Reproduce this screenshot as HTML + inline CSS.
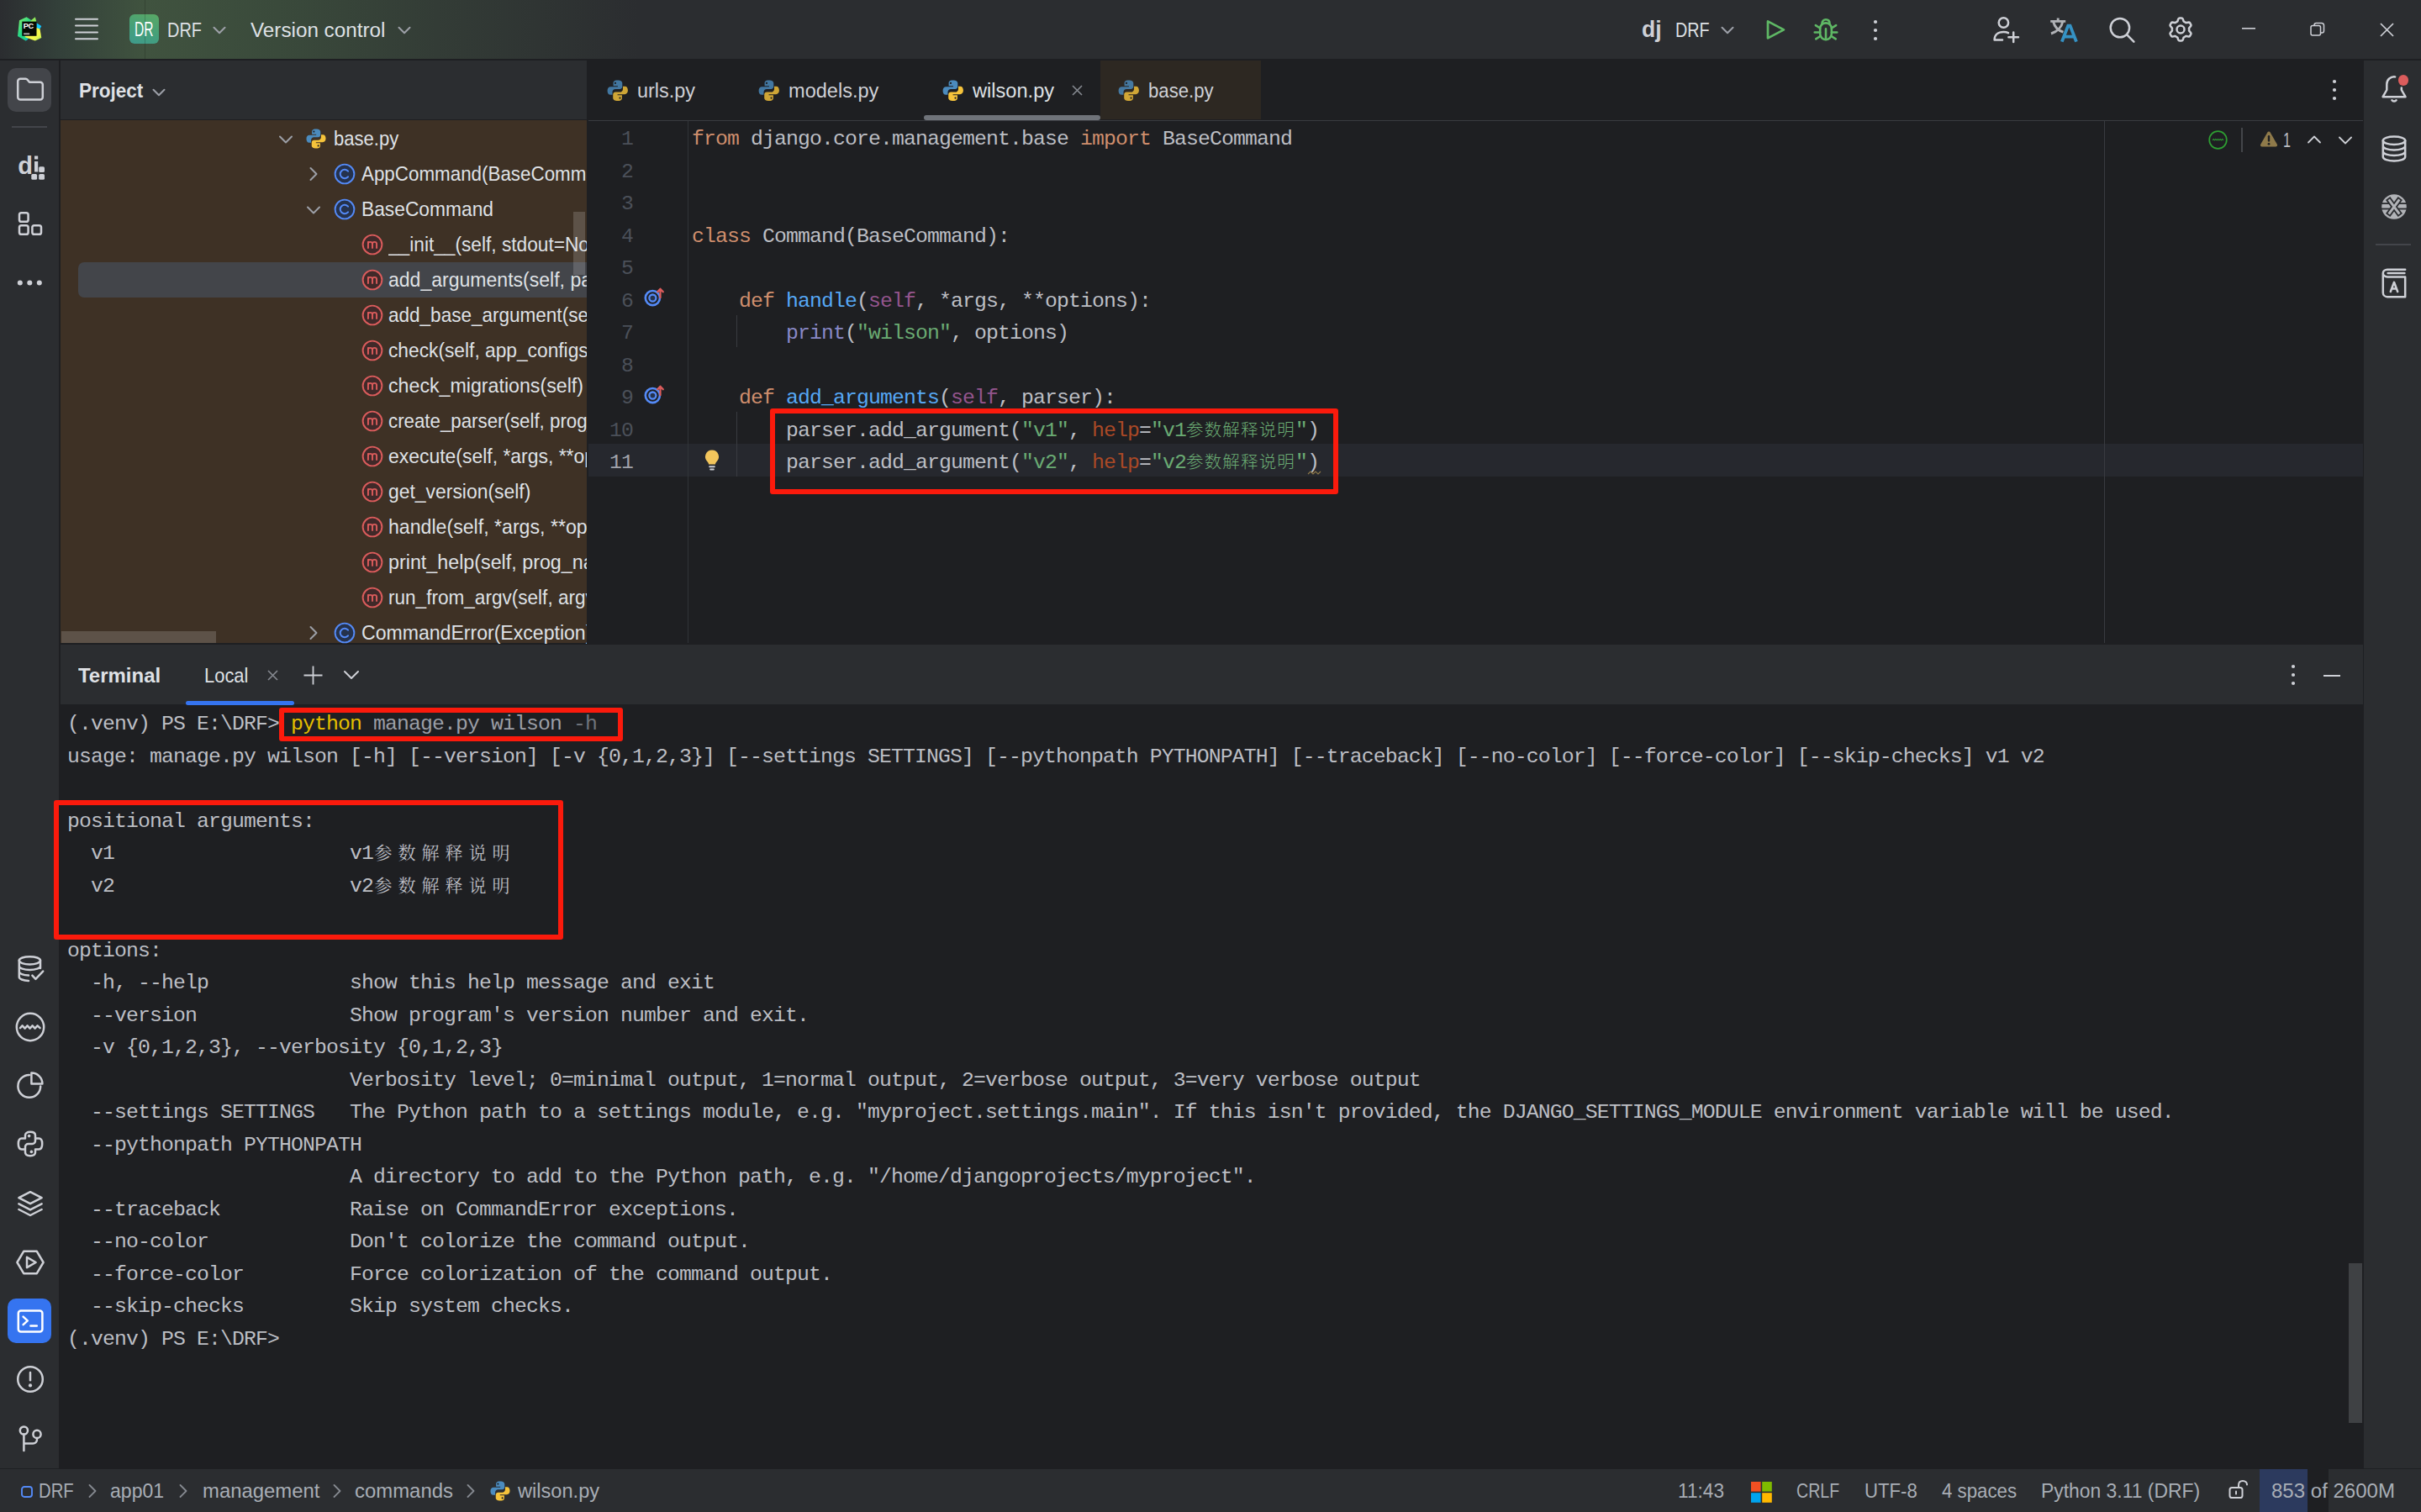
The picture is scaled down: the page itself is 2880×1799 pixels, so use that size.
<!DOCTYPE html>
<html lang="en"><head><meta charset="utf-8"><title>DRF – wilson.py</title>
<style>
*{box-sizing:border-box;margin:0;padding:0}
html,body{width:2880px;height:1799px;overflow:hidden;background:#1e1f22}
body{position:relative;font-family:"Liberation Sans","Noto Sans CJK SC",sans-serif;color:#dfe1e5;font-size:24.2px}
.b{position:absolute}
.t{position:absolute;white-space:pre;line-height:30px;height:30px;color:#dfe1e5}
.x{display:inline-block;transform-origin:0 50%;white-space:pre}
.m{position:absolute;white-space:pre;font-family:"Liberation Mono","Noto Sans CJK SC",monospace;font-size:24.8px;line-height:38.5px;height:38.5px;color:#bcbec4;letter-spacing:-0.882px}
svg{position:absolute;overflow:visible}
.k{color:#cf8e6d}.f{color:#56a8f5}.s{color:#6aab73}.p{color:#94558d}.bi{color:#8888c6}.kw{color:#aa4926}
.cj{font-family:"Liberation Mono","Noto Sans CJK SC",sans-serif;line-height:0}

.ec{font-size:20.5px;letter-spacing:1.17px;font-weight:300}
.tc{font-family:"Liberation Mono","Noto Serif CJK SC","Noto Sans CJK SC",serif;font-size:21px;letter-spacing:7px;margin-left:1.5px;line-height:0}
</style></head><body>
<div class="b" style="left:0px;top:0px;width:2880px;height:70px;background:#2b2d30;background:linear-gradient(90deg,#2b2d30 0,#33403a 70px,#40533f 172px,#3a4a3b 330px,#333c36 520px,#2b2d30 760px)"></div>
<div class="b" style="left:0px;top:70px;width:2880px;height:2px;background:#1e1f22;"></div>
<div class="b" style="left:154px;top:17px;width:35px;height:35px;border-radius:6px;background:linear-gradient(200deg,#5aa864 0%,#45a07a 55%,#3e9a8c 100%)"></div>
<div class="b" style="left:171.5px;top:0px;width:1px;height:70px;background:rgba(0,0,0,0.18);"></div>
<div class="b" style="left:0px;top:72px;width:70px;height:1676px;background:#2b2d30;"></div>
<div class="b" style="left:70px;top:72px;width:2px;height:1676px;background:#1e1f22;"></div>
<div class="b" style="left:2812px;top:72px;width:68px;height:1676px;background:#2b2d30;"></div>
<div class="b" style="left:72px;top:72px;width:626px;height:70px;background:#2b2d30;"></div>
<div class="b" style="left:72px;top:142px;width:626px;height:1px;background:#1e1f22;"></div>
<div class="b" style="left:72px;top:143px;width:626px;height:622px;background:#3e3125;"></div>
<div class="b" style="left:700px;top:142.5px;width:2111px;height:1.2px;background:#393b40;"></div>
<div class="b" style="left:1309px;top:72px;width:191px;height:70px;background:#2d2822;"></div>
<div class="b" style="left:1099px;top:137px;width:210px;height:6px;background:#6f737a;border-radius:3px"></div>
<div class="b" style="left:700px;top:528.25px;width:2111px;height:39px;background:#26282e;"></div>
<div class="b" style="left:818px;top:144px;width:1px;height:621px;background:#313438;"></div>
<div class="b" style="left:2503px;top:143px;width:1px;height:622px;background:#393b40;"></div>
<div class="b" style="left:876px;top:375px;width:1px;height:38px;background:#393b40;"></div>
<div class="b" style="left:876px;top:490px;width:1px;height:77px;background:#393b40;"></div>
<div class="b" style="left:72px;top:767px;width:2739px;height:71px;background:#2b2d30;"></div>
<div class="b" style="left:72px;top:765px;width:2739px;height:2px;background:#1e1f22;"></div>
<div class="b" style="left:221px;top:834px;width:129px;height:5px;background:#3574f0;border-radius:2.5px"></div>
<div class="b" style="left:2794px;top:1503px;width:16px;height:190px;background:#3f4144;border-radius:0"></div>
<div class="b" style="left:0px;top:1748px;width:2880px;height:51px;background:#2b2d30;"></div>
<div class="b" style="left:0px;top:1747px;width:2880px;height:1px;background:#1e1f22;"></div>
<div class="b" style="left:2688px;top:1748px;width:57px;height:51px;background:#2c3a5e;"></div>
<div class="b" style="left:2745px;top:1748px;width:25px;height:51px;background:#1e1f22;"></div>
<div class="b" style="left:9px;top:81px;width:52px;height:52px;background:#43454a;border-radius:10px"></div>
<div class="b" style="left:9px;top:1545px;width:52px;height:53px;background:#3574f0;border-radius:10px"></div>
<div class="b" style="left:14px;top:150px;width:42px;height:2px;background:#43454a;"></div>
<div class="b" style="left:2826px;top:290px;width:42px;height:2px;background:#43454a;"></div>
<div class="b" style="left:93px;top:312px;width:605px;height:42px;background:#43454a;border-radius:7px 0 0 7px"></div>
<div class="b" style="left:682px;top:252px;width:14px;height:75px;background:rgba(255,255,255,0.16);"></div>
<div class="b" style="left:73px;top:751px;width:184px;height:14px;background:rgba(255,255,255,0.16);"></div>
<div class="b" style="left:915.5px;top:486px;width:676.7px;height:101.7px;background:transparent;border:6px solid #fb1a0c;border-radius:3px"></div>
<div class="b" style="left:332px;top:842px;width:409px;height:40px;background:transparent;border:6px solid #fb1a0c;border-radius:3px"></div>
<div class="b" style="left:64px;top:952px;width:606px;height:166px;background:transparent;border:6px solid #fb1a0c;border-radius:3px"></div>
<div class="t" style="left:199px;top:20.8px"><span class="x" style="transform:scaleX(0.8246)">DRF</span></div>
<div class="t" style="left:298px;top:20.8px"><span class="x" style="transform:scaleX(1.0025)">Version control</span></div>
<div class="t" style="left:1993px;top:20.8px"><span class="x" style="transform:scaleX(0.8166)">DRF</span></div>
<div class="t" style="left:1953.4px;top:19.599999999999998px"><span class="x" style="transform:scaleX(0.9651);font-size:27.5px;font-weight:700;color:#ced0d6">dj</span></div>
<div class="t" style="left:160.3px;top:20.099999999999998px"><span class="x" style="transform:scaleX(0.6770);font-size:23px;font-weight:400;color:#ffffff">DR</span></div>
<div class="t" style="left:93.7px;top:93.1px"><span class="x" style="transform:scaleX(0.9537);font-size:23.6px;font-weight:700">Project</span></div>
<div class="t" style="left:396.8px;top:150.3px;width:301.2px;overflow:hidden"><span class="x" style="transform:scaleX(0.9113)">base.py</span></div>
<div class="t" style="left:429.8px;top:192.3px;width:268.2px;overflow:hidden"><span class="x" style="transform:scaleX(0.9252)">AppCommand(BaseCommand)</span></div>
<div class="t" style="left:429.8px;top:234.3px;width:268.2px;overflow:hidden"><span class="x" style="transform:scaleX(0.9418)">BaseCommand</span></div>
<div class="t" style="left:462.2px;top:276.3px;width:235.8px;overflow:hidden"><span class="x" style="transform:scaleX(0.9377)">__init__(self, stdout=None, stderr=None)</span></div>
<div class="t" style="left:462.2px;top:318.3px;width:235.8px;overflow:hidden"><span class="x" style="transform:scaleX(0.9523)">add_arguments(self, parser)</span></div>
<div class="t" style="left:462.2px;top:360.3px;width:235.8px;overflow:hidden"><span class="x" style="transform:scaleX(0.9312)">add_base_argument(self, parser)</span></div>
<div class="t" style="left:462.2px;top:402.3px;width:235.8px;overflow:hidden"><span class="x" style="transform:scaleX(0.9403)">check(self, app_configs=None)</span></div>
<div class="t" style="left:462.2px;top:444.3px;width:235.8px;overflow:hidden"><span class="x" style="transform:scaleX(0.9588)">check_migrations(self)</span></div>
<div class="t" style="left:462.2px;top:486.3px;width:235.8px;overflow:hidden"><span class="x" style="transform:scaleX(0.9214)">create_parser(self, prog_name)</span></div>
<div class="t" style="left:462.2px;top:528.3px;width:235.8px;overflow:hidden"><span class="x" style="transform:scaleX(0.9482)">execute(self, *args, **options)</span></div>
<div class="t" style="left:462.2px;top:570.3px;width:235.8px;overflow:hidden"><span class="x" style="transform:scaleX(0.9469)">get_version(self)</span></div>
<div class="t" style="left:462.2px;top:612.3px;width:235.8px;overflow:hidden"><span class="x" style="transform:scaleX(0.9564)">handle(self, *args, **options)</span></div>
<div class="t" style="left:462.2px;top:654.3px;width:235.8px;overflow:hidden"><span class="x" style="transform:scaleX(0.9627)">print_help(self, prog_name)</span></div>
<div class="t" style="left:462.2px;top:696.3px;width:235.8px;overflow:hidden"><span class="x" style="transform:scaleX(0.9330)">run_from_argv(self, argv)</span></div>
<div class="t" style="left:429.8px;top:738.3px;width:268.2px;overflow:hidden"><span class="x" style="transform:scaleX(0.9538)">CommandError(Exception)</span></div>
<div class="t" style="left:757.8px;top:92.8px"><span class="x" style="transform:scaleX(0.9684);color:#ced0d6">urls.py</span></div>
<div class="t" style="left:938.3px;top:92.8px"><span class="x" style="transform:scaleX(0.9741);color:#ced0d6">models.py</span></div>
<div class="t" style="left:1157.2px;top:92.8px"><span class="x" style="transform:scaleX(0.9760)">wilson.py</span></div>
<div class="t" style="left:1365.8px;top:92.8px"><span class="x" style="transform:scaleX(0.9172);color:#ced0d6">base.py</span></div>
<div class="t" style="left:2715.8px;top:151.70000000000002px"><span class="x" style="transform:scaleX(0.6690);color:#bcbec4">1</span></div>
<div class="t" style="left:93px;top:788.6999999999999px"><span class="x" style="transform:scaleX(1.0166);font-size:23.6px;font-weight:700">Terminal</span></div>
<div class="t" style="left:242.9px;top:788.6999999999999px"><span class="x" style="transform:scaleX(0.9061)">Local</span></div>
<div class="t" style="left:46.2px;top:1759.3px"><span class="x" style="transform:scaleX(0.8387);color:#a8adb5">DRF</span></div>
<div class="t" style="left:130.9px;top:1759.3px"><span class="x" style="transform:scaleX(0.9529);color:#a8adb5">app01</span></div>
<div class="t" style="left:240.5px;top:1759.3px"><span class="x" style="transform:scaleX(0.9880);color:#a8adb5">management</span></div>
<div class="t" style="left:421.7px;top:1759.3px"><span class="x" style="transform:scaleX(0.9890);color:#a8adb5">commands</span></div>
<div class="t" style="left:616.4px;top:1759.3px"><span class="x" style="transform:scaleX(0.9760);color:#a8adb5">wilson.py</span></div>
<div class="t" style="left:1996px;top:1759.3px"><span class="x" style="transform:scaleX(0.9364);color:#a8adb5">11:43</span></div>
<div class="t" style="left:2137.2px;top:1759.3px"><span class="x" style="transform:scaleX(0.8089);color:#a8adb5">CRLF</span></div>
<div class="t" style="left:2217.8px;top:1759.3px"><span class="x" style="transform:scaleX(0.9164);color:#a8adb5">UTF-8</span></div>
<div class="t" style="left:2309.7px;top:1759.3px"><span class="x" style="transform:scaleX(0.9203);color:#a8adb5">4 spaces</span></div>
<div class="t" style="left:2427.5px;top:1759.3px"><span class="x" style="transform:scaleX(0.9462);color:#a8adb5">Python 3.11 (DRF)</span></div>
<div class="t" style="left:2702.4px;top:1759.3px"><span class="x" style="transform:scaleX(0.9937);color:#a8adb5">853 of 2600M</span></div>
<div class="m" style="left:653px;width:100px;text-align:right;top:146.3px;color:#4b5059">1</div>
<div class="m" style="left:823px;top:146.3px"><span class="k">from</span> django.core.management.base <span class="k">import</span> BaseCommand</div>
<div class="m" style="left:653px;width:100px;text-align:right;top:184.8px;color:#4b5059">2</div>
<div class="m" style="left:653px;width:100px;text-align:right;top:223.3px;color:#4b5059">3</div>
<div class="m" style="left:653px;width:100px;text-align:right;top:261.8px;color:#4b5059">4</div>
<div class="m" style="left:823px;top:261.8px"><span class="k">class</span> Command(BaseCommand):</div>
<div class="m" style="left:653px;width:100px;text-align:right;top:300.3px;color:#4b5059">5</div>
<div class="m" style="left:653px;width:100px;text-align:right;top:338.8px;color:#4b5059">6</div>
<div class="m" style="left:823px;top:338.8px">    <span class="k">def</span> <span class="f">handle</span>(<span class="p">self</span>, *args, **options):</div>
<div class="m" style="left:653px;width:100px;text-align:right;top:377.3px;color:#4b5059">7</div>
<div class="m" style="left:823px;top:377.3px">        <span class="bi">print</span>(<span class="s">"wilson"</span>, options)</div>
<div class="m" style="left:653px;width:100px;text-align:right;top:415.8px;color:#4b5059">8</div>
<div class="m" style="left:653px;width:100px;text-align:right;top:454.3px;color:#4b5059">9</div>
<div class="m" style="left:823px;top:454.3px">    <span class="k">def</span> <span class="f">add_arguments</span>(<span class="p">self</span>, parser):</div>
<div class="m" style="left:653px;width:100px;text-align:right;top:492.8px;color:#4b5059">10</div>
<div class="m" style="left:823px;top:492.8px">        parser.add_argument(<span class="s">"v1"</span>, <span class="kw">help</span>=<span class="s">"v1<span class="cj ec">参数解释说明</span>"</span>)</div>
<div class="m" style="left:653px;width:100px;text-align:right;top:531.3px;color:#a1a3ab">11</div>
<div class="m" style="left:823px;top:531.3px">        parser.add_argument(<span class="s">"v2"</span>, <span class="kw">help</span>=<span class="s">"v2<span class="cj ec">参数解释说明</span>"</span>)</div>
<div class="m" style="left:80px;top:842.05px">(.venv) PS E:\DRF&gt; <span style="color:#e5bf00">python</span> <span style="color:#9b9ea6">manage.py wilson</span> <span style="color:#6f737a">-h</span></div>
<div class="m" style="left:80px;top:880.55px">usage: manage.py wilson [-h] [--version] [-v {0,1,2,3}] [--settings SETTINGS] [--pythonpath PYTHONPATH] [--traceback] [--no-color] [--force-color] [--skip-checks] v1 v2</div>
<div class="m" style="left:80px;top:957.55px">positional arguments:</div>
<div class="m" style="left:80px;top:996.05px">  v1                    v1<span class="cj tc">参数解释说明</span></div>
<div class="m" style="left:80px;top:1034.55px">  v2                    v2<span class="cj tc">参数解释说明</span></div>
<div class="m" style="left:80px;top:1111.55px">options:</div>
<div class="m" style="left:80px;top:1150.05px">  -h, --help            show this help message and exit</div>
<div class="m" style="left:80px;top:1188.55px">  --version             Show program's version number and exit.</div>
<div class="m" style="left:80px;top:1227.05px">  -v {0,1,2,3}, --verbosity {0,1,2,3}</div>
<div class="m" style="left:80px;top:1265.55px">                        Verbosity level; 0=minimal output, 1=normal output, 2=verbose output, 3=very verbose output</div>
<div class="m" style="left:80px;top:1304.05px">  --settings SETTINGS   The Python path to a settings module, e.g. "myproject.settings.main". If this isn't provided, the DJANGO_SETTINGS_MODULE environment variable will be used.</div>
<div class="m" style="left:80px;top:1342.55px">  --pythonpath PYTHONPATH</div>
<div class="m" style="left:80px;top:1381.05px">                        A directory to add to the Python path, e.g. "/home/djangoprojects/myproject".</div>
<div class="m" style="left:80px;top:1419.55px">  --traceback           Raise on CommandError exceptions.</div>
<div class="m" style="left:80px;top:1458.05px">  --no-color            Don't colorize the command output.</div>
<div class="m" style="left:80px;top:1496.55px">  --force-color         Force colorization of the command output.</div>
<div class="m" style="left:80px;top:1535.05px">  --skip-checks         Skip system checks.</div>
<div class="m" style="left:80px;top:1573.55px">(.venv) PS E:\DRF&gt;</div>
<svg style="left:20.9px;top:20px" width="28.4" height="28.6" viewBox="0 0 28.4 28.6" fill="none"><defs><linearGradient id="pg1" x1="0" y1="0" x2="1" y2="1"><stop offset="0" stop-color="#8af06a"/><stop offset=".45" stop-color="#21d789"/><stop offset="1" stop-color="#16c98f"/></linearGradient><linearGradient id="pg2" x1="0" y1="0" x2="1" y2="1"><stop offset="0" stop-color="#f4f94c"/><stop offset=".7" stop-color="#f1f74b"/><stop offset="1" stop-color="#9be95a"/></linearGradient></defs><path d="M2 4.300L10.600 0.300L16.200 4L22.200 5.300L12.200 26.800L9.600 28.400L0 23.100Z" fill="url(#pg1)"/><path d="M16.200 4L20.800 0.300L22.300 5.500L12 9Z" fill="#8fe85a"/><path d="M22.400 7.200L28.300 10.900L26.500 14.600L22.400 13.200Z" fill="#12c6ff"/><path d="M22.600 13.100L26.500 14.500L28.300 25.100L20.800 28.400L8.300 24.100L12 20Z" fill="url(#pg2)"/><path d="M9.600 28.400L12.200 26.800L10.800 25Z" fill="#0ea8e8"/><rect x="5.300" y="5.600" width="17.200" height="17.200" fill="#050a05"/><rect x="7.100" y="19.300" width="7.100" height="2" fill="#a6a8a6"/><text x="6.700" y="14.300" font-family="Liberation Sans,sans-serif" font-weight="700" font-size="9.200" fill="#fff" letter-spacing="-0.2">PC</text></svg>
<svg style="left:89px;top:20px" width="28" height="30" viewBox="0 0 28 30" fill="none"><rect x="0" y="1.8000000000000007" width="28" height="2" rx="1" fill="#ced0d6"/><rect x="0" y="9.600000000000001" width="28" height="2" rx="1" fill="#ced0d6"/><rect x="0" y="17.4" width="28" height="2" rx="1" fill="#ced0d6"/><rect x="0" y="25.200000000000003" width="28" height="2" rx="1" fill="#ced0d6"/></svg>
<svg style="left:261px;top:35.5px" width="1" height="1"><path d="M-6.5 -3.25 L0 3.25 L6.5 -3.25" stroke="#9da0a8" stroke-width="2" fill="none" stroke-linecap="round" stroke-linejoin="round"/></svg>
<svg style="left:481px;top:35.5px" width="1" height="1"><path d="M-6.5 -3.25 L0 3.25 L6.5 -3.25" stroke="#9da0a8" stroke-width="2" fill="none" stroke-linecap="round" stroke-linejoin="round"/></svg>
<svg style="left:189px;top:109.5px" width="1" height="1"><path d="M-6.5 -3.25 L0 3.25 L6.5 -3.25" stroke="#9da0a8" stroke-width="2" fill="none" stroke-linecap="round" stroke-linejoin="round"/></svg>
<svg style="left:2055px;top:36px" width="1" height="1"><path d="M-6.5 -3.25 L0 3.25 L6.5 -3.25" stroke="#9da0a8" stroke-width="2" fill="none" stroke-linecap="round" stroke-linejoin="round"/></svg>
<svg style="left:417.8px;top:803.4px" width="1" height="1"><path d="M-8.0 -4.0 L0 4.0 L8.0 -4.0" stroke="#ced0d6" stroke-width="2" fill="none" stroke-linecap="round" stroke-linejoin="round"/></svg>
<svg style="left:15.5px;top:86.4px" width="40" height="40" viewBox="0 0 20 20" fill="none"><path d="M2.6 5.4A1.5 1.5 0 0 1 4.1 3.900H7.2C7.7 3.900 8.1 4.100 8.4 4.500L9.5 5.900H15.9A1.500 1.500 0 0 1 17.400 7.400V14.700A1.500 1.500 0 0 1 15.900 16.200H4.100A1.500 1.500 0 0 1 2.600 14.700Z" stroke="#ced0d6" stroke-width="1.25" stroke-linecap="round" stroke-linejoin="round"/></svg>
<svg style="left:20px;top:180px" width="36" height="36" viewBox="0 0 36 36" fill="none"><text x="1.2" y="27" font-family="Liberation Sans,sans-serif" font-weight="700" font-size="29" fill="#ced0d6">d</text><rect x="21" y="5.500" width="4.200" height="4" fill="#ced0d6"/><rect x="21" y="12" width="4.200" height="12.500" fill="#ced0d6"/><rect x="17.300" y="27" width="6.800" height="6.800" rx="1.600" fill="#ced0d6"/><rect x="26.200" y="27" width="6.800" height="6.800" rx="1.600" fill="#ced0d6"/><rect x="26.200" y="18.200" width="6.800" height="6.800" rx="1.600" fill="#ced0d6"/></svg>
<svg style="left:15.5px;top:246.39999999999998px" width="40" height="40" viewBox="0 0 20 20" fill="none"><rect x="3.500" y="3.600" width="5.300" height="5.300" rx="1.200" stroke="#ced0d6" stroke-width="1.25" stroke-linecap="round" stroke-linejoin="round"/><rect x="3.500" y="11.100" width="5.300" height="5.300" rx="1.200" stroke="#ced0d6" stroke-width="1.25" stroke-linecap="round" stroke-linejoin="round"/><rect x="11.200" y="11.100" width="5.300" height="5.300" rx="1.200" stroke="#ced0d6" stroke-width="1.25" stroke-linecap="round" stroke-linejoin="round"/></svg>
<svg style="left:20px;top:330px" width="32" height="12" viewBox="0 0 32 12" fill="none"><circle cx="3.8000000000000007" cy="6.500" r="3" fill="#ced0d6"/><circle cx="15.299999999999997" cy="6.500" r="3" fill="#ced0d6"/><circle cx="26.799999999999997" cy="6.500" r="3" fill="#ced0d6"/></svg>
<svg style="left:15.5px;top:1131.8px" width="40" height="40" viewBox="0 0 20 20" fill="none"><ellipse cx="9.700" cy="5.400" rx="6.300" ry="2.300" stroke="#ced0d6" stroke-width="1.25" stroke-linecap="round" stroke-linejoin="round"/><path d="M3.400 5.400V15.200A6.300 2.300 0 0 0 9 17.490M16 5.400V10M3.400 8.700A6.300 2.300 0 0 0 16 8.700M3.400 12A6.300 2.300 0 0 0 9 14.290" stroke="#ced0d6" stroke-width="1.25" stroke-linecap="round" stroke-linejoin="round"/><path d="M11.200 14.300L13.200 16.400L17.600 11.800" stroke="#ced0d6" stroke-width="1.25" stroke-linecap="round" stroke-linejoin="round"/></svg>
<svg style="left:15.5px;top:1201.5px" width="40" height="40" viewBox="0 0 20 20" fill="none"><circle cx="10" cy="10" r="8.100" stroke="#ced0d6" stroke-width="1.25" stroke-linecap="round" stroke-linejoin="round"/><path d="M4 10.600L5.300 9.200L6.800 10.800L8.300 9.200L9.800 10.800L11.300 9.200L12.800 10.800L14.300 9.200L15.800 10.600" stroke="#ced0d6" stroke-width="1.25" stroke-linecap="round" stroke-linejoin="round"/></svg>
<svg style="left:15.5px;top:1271.4px" width="40" height="40" viewBox="0 0 20 20" fill="none"><path d="M9.400 4A6.700 6.700 0 1 0 16.100 10.700" stroke="#ced0d6" stroke-width="1.25" stroke-linecap="round" stroke-linejoin="round"/><path d="M10.700 2.800V9.300H17.200A6.500 6.500 0 0 0 10.700 2.800Z" stroke="#ced0d6" stroke-width="1.25" stroke-linecap="round" stroke-linejoin="round"/></svg>
<svg style="left:15.5px;top:1341.2px" width="40" height="40" viewBox="0 0 20 20" fill="none"><path d="M7 6.800V5C7 3.700 8 2.900 10 2.900S13 3.700 13 5V8.200C13 9.200 12.200 10 11.200 10H8.800C7.800 10 7 10.800 7 11.800V15C7 16.300 8 17.100 10 17.100S13 16.300 13 15V13.200M7 6.800H4.900C3.600 6.800 2.900 8 2.900 10S3.600 13.200 4.900 13.200H7M13 6.800H15.100C16.400 6.800 17.100 8 17.100 10S16.400 13.200 15.100 13.200H13" stroke="#ced0d6" stroke-width="1.25" stroke-linecap="round" stroke-linejoin="round"/><circle cx="9.300" cy="5.300" r=".9" fill="#ced0d6"/><circle cx="10.700" cy="14.700" r=".9" fill="#ced0d6"/></svg>
<svg style="left:15.5px;top:1412.0px" width="40" height="40" viewBox="0 0 20 20" fill="none"><path d="M10 3.100L16.800 6.600L10 10.100L3.200 6.600Z" stroke="#ced0d6" stroke-width="1.25" stroke-linecap="round" stroke-linejoin="round"/><path d="M3.200 10.200L10 13.700L16.800 10.200" stroke="#ced0d6" stroke-width="1.25" stroke-linecap="round" stroke-linejoin="round"/><path d="M3.200 13.500L10 17L16.800 13.500" stroke="#ced0d6" stroke-width="1.25" stroke-linecap="round" stroke-linejoin="round"/></svg>
<svg style="left:15.5px;top:1481.5px" width="40" height="40" viewBox="0 0 20 20" fill="none"><path d="M6.100 3.400H13.900L17.800 10L13.900 16.600H6.100L2.200 10Z" stroke="#ced0d6" stroke-width="1.25" stroke-linecap="round" stroke-linejoin="round"/><path d="M8 6.900L13.300 10L8 13.100Z" stroke="#ced0d6" stroke-width="1.25" stroke-linecap="round" stroke-linejoin="round"/></svg>
<svg style="left:15.5px;top:1551.5px" width="40" height="40" viewBox="0 0 20 20" fill="none"><rect x="2.900" y="3.700" width="14.300" height="12.600" rx="1.500" stroke="#fff" stroke-width="1.25" stroke-linecap="round" stroke-linejoin="round"/><path d="M5.800 7.300L8.400 9.700L5.800 12.100M10.200 12.800H13.900" stroke="#fff" stroke-width="1.25" stroke-linecap="round" stroke-linejoin="round"/></svg>
<svg style="left:15.5px;top:1621.3px" width="40" height="40" viewBox="0 0 20 20" fill="none"><circle cx="10" cy="10" r="7.400" stroke="#ced0d6" stroke-width="1.25" stroke-linecap="round" stroke-linejoin="round"/><path d="M10 6V10.600" stroke="#ced0d6" stroke-width="1.25" stroke-linecap="round" stroke-linejoin="round"/><circle cx="10" cy="13.700" r="1.050" fill="#ced0d6"/></svg>
<svg style="left:15.5px;top:1691.5px" width="40" height="40" viewBox="0 0 20 20" fill="none"><circle cx="6.200" cy="5" r="2.300" stroke="#ced0d6" stroke-width="1.25" stroke-linecap="round" stroke-linejoin="round"/><circle cx="14" cy="7.200" r="2.300" stroke="#ced0d6" stroke-width="1.25" stroke-linecap="round" stroke-linejoin="round"/><path d="M6.200 7.300V17M14 9.500V10.400C14 11.800 13 12.700 11.600 12.700H6.200" stroke="#ced0d6" stroke-width="1.25" stroke-linecap="round" stroke-linejoin="round"/></svg>
<svg style="left:2827.6px;top:86.4px" width="40" height="40" viewBox="0 0 20 20" fill="none"><path d="M10.6 2.700A4.400 4.400 0 0 0 5.650 7.100V10.500L3.300 14.600H16.750L14.400 10.500V9.200" stroke="#ced0d6" stroke-width="1.25" stroke-linecap="round" stroke-linejoin="round"/><path d="M8.700 16.600C9 17.100 9.500 17.300 10 17.300S11 17.100 11.300 16.600" stroke="#ced0d6" stroke-width="1.25" stroke-linecap="round" stroke-linejoin="round"/></svg>
<div class="b" style="left:2852.5px;top:89px;width:12.600px;height:12.600px;border-radius:50%;background:#db5c5c"></div>
<svg style="left:2827.6px;top:156.6px" width="40" height="40" viewBox="0 0 20 20" fill="none"><ellipse cx="10" cy="5.100" rx="6.600" ry="2.400" stroke="#ced0d6" stroke-width="1.25" stroke-linecap="round" stroke-linejoin="round"/><path d="M3.400 5.100V14.900A6.600 2.400 0 0 0 16.600 14.900V5.100M3.400 8.400A6.600 2.400 0 0 0 16.600 8.400M3.400 11.650A6.600 2.400 0 0 0 16.600 11.650" stroke="#ced0d6" stroke-width="1.25" stroke-linecap="round" stroke-linejoin="round"/></svg>
<svg style="left:2827.6px;top:226.2px" width="40" height="40" viewBox="0 0 20 20" fill="none"><circle cx="10" cy="10" r="7.400" fill="#b1b3b7"/><rect x="2" y="7.600" width="16" height=".9" fill="#2b2d30"/><rect x="2" y="10.800" width="16" height=".9" fill="#2b2d30"/><path d="M7.300 6.300L12.700 13.700M12.700 6.300L7.300 13.700" stroke="#2b2d30" stroke-width="3.300" stroke-linecap="square"/><path d="M7.300 6.300L12.700 13.700M12.700 6.300L7.300 13.700" stroke="#b1b3b7" stroke-width="1.500" stroke-linecap="square"/></svg>
<svg style="left:2827.6px;top:316.8px" width="40" height="40" viewBox="0 0 20 20" fill="none"><path d="M16.600 1.900H6A2.600 2.150 0 0 0 6 6.200H16.600V18.100H5.900A2.500 2.500 0 0 1 3.400 15.600V4.050" stroke="#ced0d6" stroke-width="1.25" stroke-linecap="round" stroke-linejoin="round"/><path d="M6.300 4.050H16.200" stroke="#ced0d6" stroke-width="1.25" stroke-linecap="round" stroke-linejoin="round"/><path d="M7.900 15L10 9.400L12.100 15M8.600 13.300H11.400" stroke="#ced0d6" stroke-width="1.25" stroke-linecap="round" stroke-linejoin="round"/></svg>
<svg style="left:2101px;top:23px" width="24" height="25" viewBox="0 0 24 25" fill="none"><path d="M2 2.4L21 12.4L2 22.4Z" stroke="#5fb865" stroke-width="2.700" stroke-linejoin="round" fill="none"/></svg>
<svg style="left:2153.0px;top:16.0px" width="38" height="38" viewBox="0 0 20 20" fill="none"><path d="M6.4 9.4C6.4 7.4 8 6 10 6S13.6 7.4 13.6 9.4V12.6C13.6 14.8 12 16.4 10 16.4S6.4 14.8 6.4 12.6Z" stroke="#5fb865" stroke-width="1.350" stroke-linecap="round" stroke-linejoin="round"/><path d="M7.6 6.4C7.6 4.8 8.6 3.8 10 3.8S12.4 4.8 12.4 6.4" stroke="#5fb865" stroke-width="1.350" stroke-linecap="round" stroke-linejoin="round"/><path d="M10 9.6V16M6.4 9.2L3.6 7.4M13.6 9.2L16.4 7.4M6.4 11.8H3M13.6 11.8H17M6.6 14.2L3.8 16M13.4 14.2L16.2 16" stroke="#5fb865" stroke-width="1.350" stroke-linecap="round" stroke-linejoin="round"/></svg>
<svg style="left:2228px;top:21.5px" width="6" height="28" viewBox="0 0 6 28" fill="none"><circle cx="3" cy="4" r="2.1" fill="#ced0d6"/><circle cx="3" cy="14" r="2.1" fill="#ced0d6"/><circle cx="3" cy="24" r="2.1" fill="#ced0d6"/></svg>
<svg style="left:2774px;top:93.3px" width="6" height="28" viewBox="0 0 6 28" fill="none"><circle cx="3" cy="4" r="2.1" fill="#ced0d6"/><circle cx="3" cy="14" r="2.1" fill="#ced0d6"/><circle cx="3" cy="24" r="2.1" fill="#ced0d6"/></svg>
<svg style="left:2724.8px;top:789.4px" width="6" height="28" viewBox="0 0 6 28" fill="none"><circle cx="3" cy="4" r="2.1" fill="#ced0d6"/><circle cx="3" cy="14" r="2.1" fill="#ced0d6"/><circle cx="3" cy="24" r="2.1" fill="#ced0d6"/></svg>
<svg style="left:2366.0px;top:15.0px" width="40" height="40" viewBox="0 0 20 20" fill="none"><circle cx="8.700" cy="6" r="2.850" stroke="#ced0d6" stroke-width="1.25" stroke-linecap="round" stroke-linejoin="round"/><path d="M8 16.200H3.300C3.300 13.200 5.500 11.500 8.700 11.500C9.800 11.500 10.700 11.700 11.500 12.100" stroke="#ced0d6" stroke-width="1.25" stroke-linecap="round" stroke-linejoin="round"/><path d="M14.600 11.700V17.500M11.700 14.600H17.500" stroke="#ced0d6" stroke-width="1.25" stroke-linecap="round" stroke-linejoin="round"/></svg>
<svg style="left:2433.5px;top:15.0px" width="40" height="40" viewBox="0 0 20 20" fill="none"><path d="M2.600 5.200H11.600M7.100 3.200V5.200M4.300 5.400C5 8.200 7.200 10.600 10.200 11.600M9.900 5.400C9.300 8.400 6.800 11.300 3 12.500" stroke="#b0b2b6" stroke-width="1.450" fill="none" stroke-linecap="butt" stroke-linejoin="round"/><path d="M9.400 17.300L13.100 7.800H14.300L18 17.300M10.900 14.300H16.500" stroke="#3592c4" stroke-width="1.900" fill="none" stroke-linejoin="miter"/></svg>
<svg style="left:2504.0px;top:15.0px" width="40" height="40" viewBox="0 0 20 20" fill="none"><circle cx="8.950" cy="9.050" r="5.600" stroke="#ced0d6" stroke-width="1.25" stroke-linecap="round" stroke-linejoin="round"/><path d="M13.100 13.200L17.200 17.300" stroke="#ced0d6" stroke-width="1.25" stroke-linecap="round" stroke-linejoin="round"/></svg>
<svg style="left:2573.5px;top:15.399999999999999px" width="40" height="40" viewBox="0 0 20 20" fill="none"><path d="M15.05 10.00L15.04 10.33L15.01 10.66L15.24 11.04L15.70 11.53L16.11 12.07L16.24 12.58L16.05 12.99L15.85 13.38L15.61 13.75L15.36 14.11L14.85 14.25L14.17 14.17L13.53 14.02L13.07 14.01L12.81 14.20L12.53 14.37L12.23 14.53L11.93 14.67L11.72 15.06L11.53 15.70L11.26 16.33L10.88 16.69L10.44 16.74L10.00 16.75L9.56 16.74L9.12 16.69L8.74 16.33L8.47 15.70L8.28 15.06L8.07 14.67L7.77 14.53L7.48 14.37L7.19 14.20L6.93 14.01L6.47 14.02L5.83 14.17L5.15 14.25L4.64 14.11L4.39 13.75L4.15 13.38L3.95 12.99L3.76 12.58L3.89 12.07L4.30 11.53L4.76 11.04L4.99 10.66L4.96 10.33L4.95 10.00L4.96 9.67L4.99 9.34L4.76 8.96L4.30 8.47L3.89 7.93L3.76 7.42L3.95 7.01L4.15 6.63L4.39 6.25L4.64 5.89L5.15 5.75L5.83 5.83L6.47 5.98L6.93 5.99L7.19 5.80L7.47 5.63L7.77 5.47L8.07 5.33L8.28 4.94L8.47 4.30L8.74 3.67L9.12 3.31L9.56 3.26L10.00 3.25L10.44 3.26L10.88 3.31L11.26 3.67L11.53 4.30L11.72 4.94L11.93 5.33L12.23 5.47L12.53 5.63L12.81 5.80L13.07 5.99L13.53 5.98L14.17 5.83L14.85 5.75L15.36 5.89L15.61 6.25L15.85 6.62L16.05 7.01L16.24 7.42L16.11 7.93L15.70 8.47L15.24 8.96L15.01 9.34L15.04 9.67Z" stroke="#ced0d6" stroke-width="1.25" stroke-linecap="round" stroke-linejoin="round"/><circle cx="10" cy="10" r="2.250" stroke="#ced0d6" stroke-width="1.25" stroke-linecap="round" stroke-linejoin="round"/></svg>
<svg style="left:2667px;top:32.6px" width="16" height="2" viewBox="0 0 16 2" fill="none"><rect width="16" height="1.6" fill="#ced0d6"/></svg>
<svg style="left:2748px;top:26px" width="18" height="18" viewBox="0 0 18 18" fill="none"><rect x="1" y="4.5" width="11.5" height="11.5" rx="2" stroke="#ced0d6" stroke-width="1.5"/><path d="M5 4.5V3.8A2.3 2.3 0 0 1 7.3 1.5H13.7A2.8 2.8 0 0 1 16.5 4.3V10.700A2.3 2.3 0 0 1 14.2 13H12.5" stroke="#ced0d6" stroke-width="1.5"/></svg>
<svg style="left:2830.5px;top:26.5px" width="17" height="17" viewBox="0 0 17 17" fill="none"><path d="M1 1L16 16M16 1L1 16" stroke="#ced0d6" stroke-width="1.7"/></svg>
<svg style="left:2764px;top:802.5px" width="20" height="2" viewBox="0 0 20 2" fill="none"><rect width="20" height="2" fill="#ced0d6"/></svg>
<svg style="left:317.5px;top:797px" width="13" height="13" viewBox="0 0 13 13" fill="none"><path d="M1 1L12 12M12 1L1 12" stroke="#868a91" stroke-width="1.6"/></svg>
<svg style="left:360.5px;top:791.5px" width="23" height="23" viewBox="0 0 23 23" fill="none"><path d="M11.5 0.5V22.5M0.5 11.5H22.5" stroke="#ced0d6" stroke-width="1.8"/></svg>
<svg style="left:1274.6px;top:100.6px" width="13" height="13" viewBox="0 0 13 13" fill="none"><path d="M1 1L12 12M12 1L1 12" stroke="#868a91" stroke-width="1.6"/></svg>
<svg style="opacity:0.82;left:720.25px;top:92.75px" width="29.5" height="29.5" viewBox="0 0 16 16" fill="none"><path d="M7.9 1.4C5.4 1.4 5.2 2.5 5.2 3.3V5h2.9v.6H3.5C2.2 5.6 1.4 6.6 1.4 8.1s.7 2.6 1.9 2.6h1.3V9c0-1.1.9-2 2-2h2.8c.9 0 1.6-.7 1.6-1.6V3.3c0-1-.9-1.9-3.1-1.9z" fill="#4b8bbe"/><circle cx="6.5" cy="3.2" r=".6" fill="#1e1f22"/><path d="M8.1 14.6c2.5 0 2.7-1.1 2.7-1.9V11H7.9v-.6h4.6c1.3 0 2.1-1 2.1-2.5s-.7-2.6-1.9-2.6h-1.3V7c0 1.1-.9 2-2 2H6.6C5.7 9 5 9.7 5 10.6v2.1c0 1 .9 1.9 3.1 1.9z" fill="#f5c33b"/><circle cx="9.5" cy="12.8" r=".6" fill="#1e1f22"/></svg>
<svg style="opacity:0.82;left:900.05px;top:92.75px" width="29.5" height="29.5" viewBox="0 0 16 16" fill="none"><path d="M7.9 1.4C5.4 1.4 5.2 2.5 5.2 3.3V5h2.9v.6H3.5C2.2 5.6 1.4 6.6 1.4 8.1s.7 2.6 1.9 2.6h1.3V9c0-1.1.9-2 2-2h2.8c.9 0 1.6-.7 1.6-1.6V3.3c0-1-.9-1.9-3.1-1.9z" fill="#4b8bbe"/><circle cx="6.5" cy="3.2" r=".6" fill="#1e1f22"/><path d="M8.1 14.6c2.5 0 2.7-1.1 2.7-1.9V11H7.9v-.6h4.6c1.3 0 2.1-1 2.1-2.5s-.7-2.6-1.9-2.6h-1.3V7c0 1.1-.9 2-2 2H6.6C5.7 9 5 9.7 5 10.6v2.1c0 1 .9 1.9 3.1 1.9z" fill="#f5c33b"/><circle cx="9.5" cy="12.8" r=".6" fill="#1e1f22"/></svg>
<svg style="opacity:1;left:1118.85px;top:92.75px" width="29.5" height="29.5" viewBox="0 0 16 16" fill="none"><path d="M7.9 1.4C5.4 1.4 5.2 2.5 5.2 3.3V5h2.9v.6H3.5C2.2 5.6 1.4 6.6 1.4 8.1s.7 2.6 1.9 2.6h1.3V9c0-1.1.9-2 2-2h2.8c.9 0 1.6-.7 1.6-1.6V3.3c0-1-.9-1.9-3.1-1.9z" fill="#4b8bbe"/><circle cx="6.5" cy="3.2" r=".6" fill="#1e1f22"/><path d="M8.1 14.6c2.5 0 2.7-1.1 2.7-1.9V11H7.9v-.6h4.6c1.3 0 2.1-1 2.1-2.5s-.7-2.6-1.9-2.6h-1.3V7c0 1.1-.9 2-2 2H6.6C5.7 9 5 9.7 5 10.6v2.1c0 1 .9 1.9 3.1 1.9z" fill="#f5c33b"/><circle cx="9.5" cy="12.8" r=".6" fill="#1e1f22"/></svg>
<svg style="opacity:0.82;left:1327.65px;top:92.75px" width="29.5" height="29.5" viewBox="0 0 16 16" fill="none"><path d="M7.9 1.4C5.4 1.4 5.2 2.5 5.2 3.3V5h2.9v.6H3.5C2.2 5.6 1.4 6.6 1.4 8.1s.7 2.6 1.9 2.6h1.3V9c0-1.1.9-2 2-2h2.8c.9 0 1.6-.7 1.6-1.6V3.3c0-1-.9-1.9-3.1-1.9z" fill="#4b8bbe"/><circle cx="6.5" cy="3.2" r=".6" fill="#1e1f22"/><path d="M8.1 14.6c2.5 0 2.7-1.1 2.7-1.9V11H7.9v-.6h4.6c1.3 0 2.1-1 2.1-2.5s-.7-2.6-1.9-2.6h-1.3V7c0 1.1-.9 2-2 2H6.6C5.7 9 5 9.7 5 10.6v2.1c0 1 .9 1.9 3.1 1.9z" fill="#f5c33b"/><circle cx="9.5" cy="12.8" r=".6" fill="#1e1f22"/></svg>
<svg style="left:580.7px;top:1760.0px" width="28" height="28" viewBox="0 0 16 16" fill="none"><path d="M7.9 1.4C5.4 1.4 5.2 2.5 5.2 3.3V5h2.9v.6H3.5C2.2 5.6 1.4 6.6 1.4 8.1s.7 2.6 1.9 2.6h1.3V9c0-1.1.9-2 2-2h2.8c.9 0 1.6-.7 1.6-1.6V3.3c0-1-.9-1.9-3.1-1.9z" fill="#4b8bbe"/><circle cx="6.5" cy="3.2" r=".6" fill="#1e1f22"/><path d="M8.1 14.6c2.5 0 2.7-1.1 2.7-1.9V11H7.9v-.6h4.6c1.3 0 2.1-1 2.1-2.5s-.7-2.6-1.9-2.6h-1.3V7c0 1.1-.9 2-2 2H6.6C5.7 9 5 9.7 5 10.6v2.1c0 1 .9 1.9 3.1 1.9z" fill="#f5c33b"/><circle cx="9.5" cy="12.8" r=".6" fill="#1e1f22"/></svg>
<svg style="left:25px;top:1768px" width="14" height="14" viewBox="0 0 14 14" fill="none"><rect x="1" y="1" width="12" height="12" rx="3" stroke="#548af7" stroke-width="1.9"/></svg>
<svg style="left:109.6px;top:1774px" width="1" height="1"><path d="M-3.5 -7.0 L3.5 0 L-3.5 7.0" stroke="#868a91" stroke-width="1.8" fill="none" stroke-linecap="round" stroke-linejoin="round"/></svg>
<svg style="left:218px;top:1774px" width="1" height="1"><path d="M-3.5 -7.0 L3.5 0 L-3.5 7.0" stroke="#868a91" stroke-width="1.8" fill="none" stroke-linecap="round" stroke-linejoin="round"/></svg>
<svg style="left:401px;top:1774px" width="1" height="1"><path d="M-3.5 -7.0 L3.5 0 L-3.5 7.0" stroke="#868a91" stroke-width="1.8" fill="none" stroke-linecap="round" stroke-linejoin="round"/></svg>
<svg style="left:559.5px;top:1774px" width="1" height="1"><path d="M-3.5 -7.0 L3.5 0 L-3.5 7.0" stroke="#868a91" stroke-width="1.8" fill="none" stroke-linecap="round" stroke-linejoin="round"/></svg>
<svg style="left:340px;top:166px" width="1" height="1"><path d="M-7.0 -3.5 L0 3.5 L7.0 -3.5" stroke="#9da0a8" stroke-width="2" fill="none" stroke-linecap="round" stroke-linejoin="round"/></svg>
<svg style="left:362.0px;top:151.0px" width="28" height="28" viewBox="0 0 16 16" fill="none"><path d="M7.9 1.4C5.4 1.4 5.2 2.5 5.2 3.3V5h2.9v.6H3.5C2.2 5.6 1.4 6.6 1.4 8.1s.7 2.6 1.9 2.6h1.3V9c0-1.1.9-2 2-2h2.8c.9 0 1.6-.7 1.6-1.6V3.3c0-1-.9-1.9-3.1-1.9z" fill="#4b8bbe"/><circle cx="6.5" cy="3.2" r=".6" fill="#1e1f22"/><path d="M8.1 14.6c2.5 0 2.7-1.1 2.7-1.9V11H7.9v-.6h4.6c1.3 0 2.1-1 2.1-2.5s-.7-2.6-1.9-2.6h-1.3V7c0 1.1-.9 2-2 2H6.6C5.7 9 5 9.7 5 10.6v2.1c0 1 .9 1.9 3.1 1.9z" fill="#f5c33b"/><circle cx="9.5" cy="12.8" r=".6" fill="#1e1f22"/></svg>
<svg style="left:372.7px;top:207px" width="1" height="1"><path d="M-3.5 -7.0 L3.5 0 L-3.5 7.0" stroke="#9da0a8" stroke-width="2" fill="none" stroke-linecap="round" stroke-linejoin="round"/></svg>
<svg style="left:396.0px;top:193.0px" width="28" height="28" viewBox="0 0 16 16" fill="none"><circle cx="8" cy="8" r="6.5" fill="#25324d" stroke="#548af7" stroke-width="1.1"/><path d="M10.3 6.1A3 3 0 1 0 10.3 9.9" stroke="#548af7" stroke-width="1.15" fill="none" stroke-linecap="round"/></svg>
<svg style="left:373px;top:250px" width="1" height="1"><path d="M-7.0 -3.5 L0 3.5 L7.0 -3.5" stroke="#9da0a8" stroke-width="2" fill="none" stroke-linecap="round" stroke-linejoin="round"/></svg>
<svg style="left:396.0px;top:235.0px" width="28" height="28" viewBox="0 0 16 16" fill="none"><circle cx="8" cy="8" r="6.5" fill="#25324d" stroke="#548af7" stroke-width="1.1"/><path d="M10.3 6.1A3 3 0 1 0 10.3 9.9" stroke="#548af7" stroke-width="1.15" fill="none" stroke-linecap="round"/></svg>
<svg style="left:429.0px;top:277.0px" width="28" height="28" viewBox="0 0 16 16" fill="none"><circle cx="8" cy="8" r="6.5" fill="#402929" stroke="#db5c5c" stroke-width="1.1"/><path d="M5.1 10.3V6.2M5.1 7.6C5.1 6.7 5.7 6.2 6.5 6.2S8 6.7 8 7.6V10.3M8 7.6C8 6.7 8.6 6.2 9.4 6.2S10.9 6.7 10.9 7.6V10.3" stroke="#db5c5c" stroke-width="1.1" fill="none" stroke-linecap="round"/></svg>
<svg style="left:429.0px;top:319.0px" width="28" height="28" viewBox="0 0 16 16" fill="none"><circle cx="8" cy="8" r="6.5" fill="#402929" stroke="#db5c5c" stroke-width="1.1"/><path d="M5.1 10.3V6.2M5.1 7.6C5.1 6.7 5.7 6.2 6.5 6.2S8 6.7 8 7.6V10.3M8 7.6C8 6.7 8.6 6.2 9.4 6.2S10.9 6.7 10.9 7.6V10.3" stroke="#db5c5c" stroke-width="1.1" fill="none" stroke-linecap="round"/></svg>
<svg style="left:429.0px;top:361.0px" width="28" height="28" viewBox="0 0 16 16" fill="none"><circle cx="8" cy="8" r="6.5" fill="#402929" stroke="#db5c5c" stroke-width="1.1"/><path d="M5.1 10.3V6.2M5.1 7.6C5.1 6.7 5.7 6.2 6.5 6.2S8 6.7 8 7.6V10.3M8 7.6C8 6.7 8.6 6.2 9.4 6.2S10.9 6.7 10.9 7.6V10.3" stroke="#db5c5c" stroke-width="1.1" fill="none" stroke-linecap="round"/></svg>
<svg style="left:429.0px;top:403.0px" width="28" height="28" viewBox="0 0 16 16" fill="none"><circle cx="8" cy="8" r="6.5" fill="#402929" stroke="#db5c5c" stroke-width="1.1"/><path d="M5.1 10.3V6.2M5.1 7.6C5.1 6.7 5.7 6.2 6.5 6.2S8 6.7 8 7.6V10.3M8 7.6C8 6.7 8.6 6.2 9.4 6.2S10.9 6.7 10.9 7.6V10.3" stroke="#db5c5c" stroke-width="1.1" fill="none" stroke-linecap="round"/></svg>
<svg style="left:429.0px;top:445.0px" width="28" height="28" viewBox="0 0 16 16" fill="none"><circle cx="8" cy="8" r="6.5" fill="#402929" stroke="#db5c5c" stroke-width="1.1"/><path d="M5.1 10.3V6.2M5.1 7.6C5.1 6.7 5.7 6.2 6.5 6.2S8 6.7 8 7.6V10.3M8 7.6C8 6.7 8.6 6.2 9.4 6.2S10.9 6.7 10.9 7.6V10.3" stroke="#db5c5c" stroke-width="1.1" fill="none" stroke-linecap="round"/></svg>
<svg style="left:429.0px;top:487.0px" width="28" height="28" viewBox="0 0 16 16" fill="none"><circle cx="8" cy="8" r="6.5" fill="#402929" stroke="#db5c5c" stroke-width="1.1"/><path d="M5.1 10.3V6.2M5.1 7.6C5.1 6.7 5.7 6.2 6.5 6.2S8 6.7 8 7.6V10.3M8 7.6C8 6.7 8.6 6.2 9.4 6.2S10.9 6.7 10.9 7.6V10.3" stroke="#db5c5c" stroke-width="1.1" fill="none" stroke-linecap="round"/></svg>
<svg style="left:429.0px;top:529.0px" width="28" height="28" viewBox="0 0 16 16" fill="none"><circle cx="8" cy="8" r="6.5" fill="#402929" stroke="#db5c5c" stroke-width="1.1"/><path d="M5.1 10.3V6.2M5.1 7.6C5.1 6.7 5.7 6.2 6.5 6.2S8 6.7 8 7.6V10.3M8 7.6C8 6.7 8.6 6.2 9.4 6.2S10.9 6.7 10.9 7.6V10.3" stroke="#db5c5c" stroke-width="1.1" fill="none" stroke-linecap="round"/></svg>
<svg style="left:429.0px;top:571.0px" width="28" height="28" viewBox="0 0 16 16" fill="none"><circle cx="8" cy="8" r="6.5" fill="#402929" stroke="#db5c5c" stroke-width="1.1"/><path d="M5.1 10.3V6.2M5.1 7.6C5.1 6.7 5.7 6.2 6.5 6.2S8 6.7 8 7.6V10.3M8 7.6C8 6.7 8.6 6.2 9.4 6.2S10.9 6.7 10.9 7.6V10.3" stroke="#db5c5c" stroke-width="1.1" fill="none" stroke-linecap="round"/></svg>
<svg style="left:429.0px;top:613.0px" width="28" height="28" viewBox="0 0 16 16" fill="none"><circle cx="8" cy="8" r="6.5" fill="#402929" stroke="#db5c5c" stroke-width="1.1"/><path d="M5.1 10.3V6.2M5.1 7.6C5.1 6.7 5.7 6.2 6.5 6.2S8 6.7 8 7.6V10.3M8 7.6C8 6.7 8.6 6.2 9.4 6.2S10.9 6.7 10.9 7.6V10.3" stroke="#db5c5c" stroke-width="1.1" fill="none" stroke-linecap="round"/></svg>
<svg style="left:429.0px;top:655.0px" width="28" height="28" viewBox="0 0 16 16" fill="none"><circle cx="8" cy="8" r="6.5" fill="#402929" stroke="#db5c5c" stroke-width="1.1"/><path d="M5.1 10.3V6.2M5.1 7.6C5.1 6.7 5.7 6.2 6.5 6.2S8 6.7 8 7.6V10.3M8 7.6C8 6.7 8.6 6.2 9.4 6.2S10.9 6.7 10.9 7.6V10.3" stroke="#db5c5c" stroke-width="1.1" fill="none" stroke-linecap="round"/></svg>
<svg style="left:429.0px;top:697.0px" width="28" height="28" viewBox="0 0 16 16" fill="none"><circle cx="8" cy="8" r="6.5" fill="#402929" stroke="#db5c5c" stroke-width="1.1"/><path d="M5.1 10.3V6.2M5.1 7.6C5.1 6.7 5.7 6.2 6.5 6.2S8 6.7 8 7.6V10.3M8 7.6C8 6.7 8.6 6.2 9.4 6.2S10.9 6.7 10.9 7.6V10.3" stroke="#db5c5c" stroke-width="1.1" fill="none" stroke-linecap="round"/></svg>
<svg style="left:372.7px;top:753px" width="1" height="1"><path d="M-3.5 -7.0 L3.5 0 L-3.5 7.0" stroke="#9da0a8" stroke-width="2" fill="none" stroke-linecap="round" stroke-linejoin="round"/></svg>
<svg style="left:396.0px;top:739.0px" width="28" height="28" viewBox="0 0 16 16" fill="none"><circle cx="8" cy="8" r="6.5" fill="#25324d" stroke="#548af7" stroke-width="1.1"/><path d="M10.3 6.1A3 3 0 1 0 10.3 9.9" stroke="#548af7" stroke-width="1.15" fill="none" stroke-linecap="round"/></svg>
<svg style="left:765.3px;top:340.45px" width="28" height="28" viewBox="0 0 16 16" fill="none"><circle cx="6.500" cy="8.300" r="4.900" stroke="#548af7" stroke-width="1.500"/><circle cx="6.500" cy="8.300" r="2.300" fill="#25324d" stroke="#548af7" stroke-width="1.300"/><path d="M11.700 8V2.200M9.800 4.100L11.700 2.100L13.600 4.100" stroke="#db5c5c" stroke-width="1.300" fill="none" stroke-linecap="round" stroke-linejoin="round"/></svg>
<svg style="left:765.3px;top:455.95px" width="28" height="28" viewBox="0 0 16 16" fill="none"><circle cx="6.500" cy="8.300" r="4.900" stroke="#548af7" stroke-width="1.500"/><circle cx="6.500" cy="8.300" r="2.300" fill="#25324d" stroke="#548af7" stroke-width="1.300"/><path d="M11.700 8V2.200M9.800 4.100L11.700 2.100L13.600 4.100" stroke="#db5c5c" stroke-width="1.300" fill="none" stroke-linecap="round" stroke-linejoin="round"/></svg>
<svg style="left:837px;top:534px" width="20" height="28" viewBox="0 0 20 28" fill="none"><path d="M10 1.5A8 8 0 0 0 4.6 15.4C5.6 16.4 6 17.4 6 18.5H14C14 17.4 14.4 16.4 15.4 15.4A8 8 0 0 0 10 1.5Z" fill="#f2c55c"/><rect x="6.2" y="20.2" width="7.6" height="2" rx="1" fill="#ced0d6"/><rect x="7.2" y="23.6" width="5.6" height="2" rx="1" fill="#ced0d6"/></svg>
<svg style="left:2626.5px;top:155px" width="23" height="23" viewBox="0 0 23 23" fill="none"><circle cx="11.5" cy="11.5" r="10.3" stroke="#2e9e32" stroke-width="1.7"/><path d="M5 11.8L6.3 10.6L7.6 11.8L8.9 10.6L10.2 11.8L11.5 10.6L12.8 11.8L14.1 10.6L15.4 11.8L16.7 10.6L18 11.8" stroke="#2e9e32" stroke-width="1.1" fill="none"/></svg>
<div class="b" style="left:2666px;top:152px;width:1.5px;height:29px;background:#43454a"></div>
<svg style="left:2688px;top:155px" width="22" height="21" viewBox="0 0 22 21" fill="none"><path d="M11 1.6C11.8 1.6 12.4 2 12.8 2.700L20.800 16.800C21.5 18.1 20.6 19.6 19.1 19.6H2.900C1.4 19.6 .5 18.1 1.2 16.800L9.2 2.700C9.6 2 10.2 1.6 11 1.600Z" fill="#8f7a4a"/><rect x="9.8" y="6" width="2.4" height="7.6" rx="1.2" fill="#1e1f22"/><circle cx="11" cy="16.300" r="1.4" fill="#1e1f22"/></svg>
<svg style="left:2753px;top:166px" width="1" height="1"><path d="M-7.0 3.5 L0 -3.5 L7.0 3.5" stroke="#ced0d6" stroke-width="1.8" fill="none" stroke-linecap="round" stroke-linejoin="round"/></svg>
<svg style="left:2790px;top:167px" width="1" height="1"><path d="M-7.0 -3.5 L0 3.5 L7.0 -3.5" stroke="#ced0d6" stroke-width="1.8" fill="none" stroke-linecap="round" stroke-linejoin="round"/></svg>
<svg style="left:2083px;top:1762.5px" width="25" height="25" viewBox="0 0 25 25" fill="none"><rect width="11.6" height="11.6" fill="#f25022"/><rect x="13.2" width="11.6" height="11.6" fill="#7fba00"/><rect y="13.2" width="11.6" height="11.6" fill="#00a4ef"/><rect x="13.2" y="13.2" width="11.6" height="11.6" fill="#ffb900"/></svg>
<svg style="left:2651px;top:1759px" width="24" height="26" viewBox="0 0 24 26" fill="none"><rect x="1.5" y="11" width="15" height="12" rx="2.6" stroke="#ced0d6" stroke-width="2"/><path d="M12 11V8.2C12 5 14 3 17 3S22 5 22 7.6" stroke="#ced0d6" stroke-width="2" stroke-linecap="round"/><path d="M9 15.5V18.5" stroke="#ced0d6" stroke-width="2" stroke-linecap="round"/></svg>
<svg style="left:1555.5px;top:559.8px" width="16" height="5" viewBox="0 0 16 5" fill="none"><path d="M0 4L3 1L6 4L9 1L12 4L15 1" stroke="#8f7a4a" stroke-width="1.1" fill="none"/></svg>
</body></html>
